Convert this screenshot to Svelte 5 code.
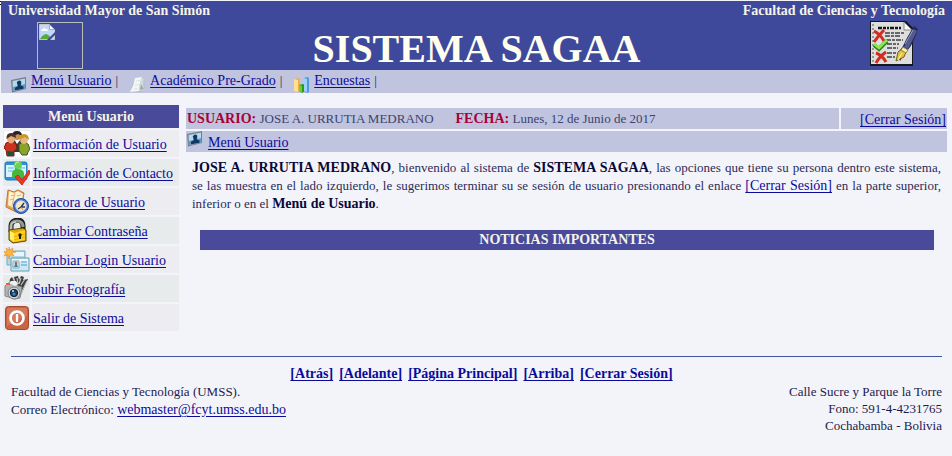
<script>
  const menu = [
    { icon: 'users', label: 'Información de Usuario' },
    { icon: 'contact', label: 'Información de Contacto' },
    { icon: 'log', label: 'Bitacora de Usuario' },
    { icon: 'lock', label: 'Cambiar Contraseña' },
    { icon: 'login', label: 'Cambiar Login Usuario' },
    { icon: 'camera', label: 'Subir Fotografía' },
    { icon: 'power', label: 'Salir de Sistema' }
  ];
  const sections = [
    { icon: 'person', label: 'Menú Usuario' },
    { icon: 'paper', label: 'Académico Pre-Grado' },
    { icon: 'chart', label: 'Encuestas' }
  ];
  const footerLinks = ['[Atrás]', '[Adelante]', '[Página Principal]', '[Arriba]', '[Cerrar Sesión]'];
</script>

{#snippet smallIcon(name)}
  <svg class="small-icon" viewBox="0 0 16 16" aria-hidden="true">
    {#if name === 'person'}
      <path d="M0 3 15 0V12L1 15.5Z" fill="#777e88" />
      <path d="M1.5 4 14 1.5V11.5L2 14Z" fill="#b4d8ec" />
      <path d="M2 10 14 7V11.5L2 14Z" fill="#639dc4" />
      <path d="M5.8 5.2Q8 2 10.2 4.5V7L9.6 8.2 12.5 9.6V11.8L4 13.2V10.7L6.8 9.2Z" fill="#113863" />
    {:else if name === 'paper'}
      <path d="M5 1 14 0 15 13 11 15 0 15Z" fill="#b3bec3" />
      <path d="M5 1 12 0Q9 7 9 14L0 15Q4 8 5 1Z" fill="#f2f6f5" />
      <path d="M12 0Q9 7 9 14L15 13Q12 8 14 2Z" fill="#d2dbdc" />
      <path d="m6 4 4-.5M5 8l4-.5M4 12l4-.5" stroke="#dbe5e3" fill="none" />
      <path d="m10 13 1-6 3 5Z" fill="#9faaad" />
    {:else}
      <path d="m0 2 4-1 2 1v12l-2 1-4-1Z" fill="#f4ae43" />
      <path d="m0 2 4 1v12l-4-1Z" fill="#ffdf94" />
      <path d="m5 8 4-1 2 1v6l-3 2-3-2Z" fill="#259f16" />
      <path d="m5 8 3 1v7l-3-2Z" fill="#6fd030" />
      <path d="m10 1 3-1 2 1v14l-2 1-3-2Z" fill="#5198dd" />
      <path d="m10 1 3 1v13l-3-1Z" fill="#9fd0f8" />
    {/if}
  </svg>
{/snippet}

{#snippet menuIcon(name)}
  <svg class="menu-icon" viewBox="0 0 26 26" aria-hidden="true">
    {#if name === 'users'}
      <rect width="26" height="26" fill="#fff" />
      <path d="m10 8 3 5 4-5 3 4-2 9H9Z" fill="#303e39" />
      <ellipse cx="13" cy="5" rx="3.7" ry="4" fill="#d18b59" />
      <path d="M8 5Q8 0 13 0t5 5l-4-2-4 2Z" fill="#252323" />
      <path d="M15 13Q19 10 24 13l2 5-2 3-1 3h-5l-3-4Z" fill="#8ba32a" stroke="#41521f" />
      <path d="M2 12q6-3 10 1l1 5-3 2v5H3l-1-6-2-2Z" fill="#cb3320" stroke="#771e14" />
      <path d="m3 20 7 1v4H4Z" fill="#1e5238" />
      <ellipse cx="7" cy="7.5" rx="4" ry="5" fill="#e7aa78" />
      <path d="M2.5 8Q2 2 7 2t5 5l-5-2-3 2Z" fill="#49312a" />
      <ellipse cx="20" cy="9" rx="3.8" ry="4" fill="#e4b87d" />
      <path d="M15.5 9Q15 3 20 3t5 6l-4-3-4 2Z" fill="#c49b22" />
    {:else if name === 'contact'}
      <rect x="1" y="2" width="22" height="18" rx="2" fill="#3093d1" stroke="#187bba" />
      <path d="M2 5h9v12H2ZM13 5h9v12h-9Z" fill="#d9f2ff" />
      <path d="M4 8h6M4 11h6M15 8h6" stroke="#65b7df" />
      <circle cx="14" cy="5" r="4" fill="#69d254" />
      <path d="M8 18v-5q1-4 6-4t6 4v5Z" fill="#46b93b" />
      <path d="M11 5q1-4 4-3" stroke="#c5f5a8" fill="none" />
      <path d="m11 17 3-2 4 5 7-10 1 3-8 12Z" fill="#e83b25" stroke="#d02b1c" />
    {:else if name === 'log'}
      <path d="m4 1 6 2 4-2 6 3-1 6 2 9-9 4-10-5Z" fill="#e8a34a" stroke="#b9783a" />
      <path d="m5 2 5 2 4-2 5 3-2 12-5 3-8-4Z" fill="#fff2ce" />
      <path d="m11 4-3 13M7 7l3-1m-4 5 3-1m4-3 4-1" stroke="#d6b184" fill="none" />
      <circle cx="17" cy="17" r="7.5" fill="#4776d1" stroke="#234b9f" />
      <circle cx="17" cy="17" r="5.2" fill="#fbe9b5" stroke="#bed5f4" />
      <path d="m20 14-3 4h4m-4 0-3 2" stroke="#283867" stroke-width="1.5" fill="none" />
      <path d="m17 18 2 3" stroke="#e2802c" />
    {:else if name === 'lock'}
      <path d="M7 14V8q0-5 6-6 6 0 6 6v4" fill="none" stroke="#1b1c1b" stroke-width="5" />
      <path d="M7 13V8q0-5 6-5 6 0 6 6" fill="none" stroke="#929990" stroke-width="3" />
      <path d="M7 13V8q0-4 5-4" fill="none" stroke="#e3e6de" />
      <path d="m5 12 14-2 3 2v11l-13 2-4-3Z" fill="#e2a50b" stroke="#5c4909" />
      <path d="m6 13 4 2v9l-4-3Z" fill="#fff264" />
      <path d="m10 15 11-3v10l-11 2Z" fill="#ffd118" />
      <path d="m10 19 11-3m-11 6 11-3" stroke="#e3aa10" />
      <circle cx="16" cy="17" r="1.7" fill="#211e16" />
      <path d="m15 17 2 0v4h-2Z" fill="#211e16" />
    {:else if name === 'login'}
      <path d="M3 4h18v14H3Z" fill="#b2d8e6" stroke="#76aabd" />
      <path d="M4 5h16v4H4Z" fill="#e8f6fb" />
      <path d="m5 0 1 3 3-2-1 3 4 1-4 1 2 3-4-1-1 4-1-4-4 1 2-3-3-1 4-1-1-3 3 2Z" fill="#ffb43a" stroke="#df8627" stroke-width=".5" />
      <path d="M7 11h18v13H7Z" fill="#cae9f4" stroke="#6d9fb1" />
      <path d="M8 12h16v4H8Z" fill="#eaf7fc" />
      <path d="M9 14h6v7H9Z" fill="#e7f6f7" stroke="#7badba" />
      <circle cx="12" cy="16" r="1.5" fill="#b76244" />
      <path d="m10 20 1-3h2l1 3Z" fill="#4a829b" />
      <path d="M17 15h6m-6 3h6" stroke="#79b5d1" stroke-width="1.5" />
    {:else if name === 'camera'}
      <path d="m6 3 2-2 3 5-1-5 4-1 1 4 2-4 3 1-1 3 5-1-8 18-12-6Z" fill="#3d3d3d" />
      <path d="m9 2 3 6m1-6 1 6m3-6-2 6m6-5-4 6m6-4-6 13" stroke="#c4c5c2" stroke-width="1.2" />
      <path d="m1 10 3-3h8l2 3 4 1-2 11-5 1-10-3Z" fill="#b1b4b5" stroke="#85888b" />
      <path d="m5 7 2-2h5l2 3-3 2Z" fill="#eff1f0" />
      <path d="M2 7h4v2H2Z" fill="#e7603a" />
      <circle cx="10" cy="17" r="6" fill="#d1d5d6" stroke="#808386" />
      <circle cx="10" cy="17" r="3.7" fill="#223d59" stroke="#0e202f" />
      <circle cx="10" cy="18" r="1.6" fill="#3a86c8" />
      <circle cx="9" cy="15" r="1" fill="#d3e7f4" />
    {:else}
      <rect x="1.5" y="1.5" width="23" height="23" rx="3" fill="#c86344" stroke="#a8492c" />
      <path d="M4 3h18q1 0 1 2v6Q14 14 3 21V5q0-2 1-2Z" fill="#d78768" opacity=".7" />
      <circle cx="13" cy="13" r="6.5" fill="none" stroke="#fff" stroke-width="2.7" />
      <path d="M13 9v8" stroke="#fff" stroke-width="2.3" />
    {/if}
  </svg>
{/snippet}

<div class="page">
  <header>
    <div class="institution">
      <span>Universidad Mayor de San Simón</span>
      <span>Facultad de Ciencias y Tecnología</span>
    </div>
    <div class="banner">
      <svg class="crest" viewBox="0 0 46 47" role="img" aria-label="Escudo">
        <rect x=".5" y=".5" width="45" height="46" fill="none" stroke="#bbbdb8" />
        <path d="M2.5 2.5h10l5 5v10h-15Z" fill="#c2d8f8" stroke="#c3c6cb" />
        <path d="M12.5 2.5v5h5Z" fill="#fff" stroke="#a9acb1" />
        <path d="M4 9q0-2 2-2 1-2 3 0 2 0 2 2Z" fill="#fff" />
        <path d="M3 17q2-4 6-5 4 1 5 5Z" fill="#55ad36" />
        <path d="m10 18 8-8v3l-5 5Z" fill="#3f499c" />
      </svg>
      <h1>SISTEMA SAGAA</h1>
      <svg class="form-icon" viewBox="0 0 48 46" role="img" aria-label="Formulario">
        <path d="M0 0h36l7 7v38H0Z" fill="#16171a" />
        <path d="M1 1h33l8 8v34H1Z" fill="#dedfdc" />
        <path d="M34 1v8h8Z" fill="#fafafa" stroke="#85878a" />
        <path d="M3 3v38" stroke="#555" stroke-dasharray="2 2" />
        <path d="M8 7h24" stroke="#17181a" stroke-width="2.5" stroke-dasharray="4 1 3 1 2 1" />
        <path d="M15 12h19M15 15h16M16 19h17M17 23h12M17 27h11M17 32h9M17 36h8" stroke="#404246" stroke-width="1.3" stroke-dasharray="5 1 3 1" />
        <path d="M4 10q6 3 10 10M14 9Q9 14 4 21M6 32q6 2 10 9M16 31q-6 4-10 11" fill="none" stroke="#d32a22" stroke-width="3" />
        <path d="m4 24 5 4 8-8" fill="none" stroke="#2c7c21" stroke-width="4" />
        <path d="m4 23 5 4 8-8" fill="none" stroke="#85ec42" stroke-width="2.5" />
        <path d="m28 32 5-7q4-9 11-20l4 3q-5 16-11 22l-7 10Z" fill="#242b57" />
        <path d="m34 26 9-18 4 2-9 18Z" fill="#535b8e" />
        <path d="m35 23 8-14" stroke="#9da3c6" />
        <path d="m26 40 2-9 4-3 4 3-2 5Z" fill="#e5c33e" stroke="#716326" />
        <path d="m28 39 4-7" stroke="#fff4a5" />
        <path d="m33 26 5 3-2 3-5-3Z" fill="#fff0a2" stroke="#8f8449" />
      </svg>
    </div>
  </header>

  <nav class="sections" aria-label="Secciones">
    {#each sections as section}
      <span class="section">{@render smallIcon(section.icon)}<a href="#inicio">{section.label}</a><span>|</span></span>
    {/each}
  </nav>

  <div class="columns">
    <nav class="side" aria-label="Menú de usuario">
      <h2>Menú Usuario</h2>
      <ul>
        {#each menu as item}
          <li>
            <span class="icon-cell">{@render menuIcon(item.icon)}</span>
            <a href="#opcion">{item.label}</a>
          </li>
        {/each}
      </ul>
    </nav>

    <main>
      <div class="session">
        <div class="who">
          <span><b>USUARIO:</b> JOSE A. URRUTIA MEDRANO</span>
          <span><b>FECHA:</b> Lunes, 12 de Junio de 2017</span>
        </div>
        <div class="logout"><a href="#salir">[Cerrar Sesión]</a></div>
      </div>
      <div class="trail">{@render smallIcon('person')}<a href="#inicio">Menú Usuario</a></div>
      <p>
        <b>JOSE A. URRUTIA MEDRANO</b>, bienvenido al sistema de <b>SISTEMA SAGAA</b>, las opciones que tiene su
        persona dentro este sistema, se&nbsp;las muestra en el lado izquierdo, le sugerimos terminar su se sesión de
        usuario presionando el enlace <a href="#salir">[Cerrar Sesión]</a> en la parte superior, inferior o en el
        <b>Menú de Usuario</b>.
      </p>
      <h2 class="news">NOTICIAS IMPORTANTES</h2>
    </main>
  </div>

  <footer>
    <nav class="footer-links" aria-label="Navegación">
      {#each footerLinks as label}
        <a href="#inicio">{label}</a>
      {/each}
    </nav>
    <div class="contact">
      <address>
        Facultad de Ciencias y Tecnología (UMSS).<br />
        Correo Electrónico: <a href="mailto:webmaster@fcyt.umss.edu.bo">webmaster@fcyt.umss.edu.bo</a>
      </address>
      <address>
        Calle Sucre y Parque la Torre<br />
        Fono: 591-4-4231765<br />
        Cochabamba - Bolivia
      </address>
    </div>
  </footer>
</div>

<style>
  :global(body) {
    margin: 0;
    background: #f3f4fa;
  }
  .page {
    padding: 1px 0 20px 1px;
    background: repeating-linear-gradient(#f3f4fa 0 1px, #111 1px 2px, #f3f4fa 2px 3px) 0 0 / 1px 7px no-repeat;
    font: 13px/18px "Liberation Serif", "Times New Roman", serif;
    color: #1c1a4c;
  }
  .page * {
    box-sizing: border-box;
  }
  a {
    color: #0b0b9b;
    font-size: 14px;
    text-underline-offset: 2px;
  }
  svg {
    display: block;
    flex: none;
  }
  h1,
  h2,
  p,
  ul {
    margin: 0;
    padding: 0;
  }
  header {
    background: #3f499c;
    color: #f5f4e8;
  }
  .institution {
    display: flex;
    justify-content: space-between;
    padding: 1px 7px;
    font-size: 14px;
    font-weight: bold;
  }
  .banner {
    display: flex;
    align-items: start;
    justify-content: space-between;
    padding: 0 34px 0 36px;
    height: 49px;
  }
  .crest {
    width: 46px;
    height: 47px;
    margin-top: 1px;
  }
  h1 {
    font-size: 40px;
    line-height: 55px;
    color: #fffff0;
  }
  .form-icon {
    width: 48px;
    height: 46px;
  }
  .sections {
    display: flex;
    gap: 12px;
    height: 23px;
    padding-left: 10px;
    background: #c0c4df;
    line-height: 22px;
  }
  .section {
    display: flex;
    gap: 4px;
  }
  .small-icon {
    width: 16px;
    height: 16px;
  }
  .section .small-icon {
    margin-top: 7px;
  }
  .columns {
    display: flex;
    align-items: start;
    gap: 7px;
    padding: 12px 5px 0 2px;
  }
  .side {
    flex: none;
    width: 176px;
  }
  h2 {
    background: #494a9a;
    color: #f5f4e8;
    font-size: 14px;
    text-align: center;
  }
  .side h2 {
    line-height: 23px;
  }
  ul {
    list-style: none;
  }
  li {
    display: grid;
    grid-template: 27px / 27px 1fr;
    gap: 2px;
    margin-top: 2px;
  }
  li > * {
    background: #ececf1;
  }
  li:nth-child(even) > * {
    background: #e7ebec;
  }
  li a {
    padding-left: 1px;
    line-height: 30px;
  }
  .icon-cell {
    padding: 1px 0 0 1px;
  }
  .menu-icon {
    width: 26px;
    height: 26px;
  }
  main {
    flex: 1;
    padding-top: 3px;
  }
  .session {
    display: grid;
    grid-template-columns: 1fr 106px;
    gap: 2px;
    margin-bottom: 2px;
    line-height: 21px;
    color: #3d426e;
  }
  .session > *,
  .trail {
    height: 21px;
    background: #c0c4df;
  }
  .who {
    display: flex;
    gap: 22px;
    padding-left: 1px;
  }
  .who b {
    color: #a80038;
    font-size: 14px;
  }
  .logout {
    padding-right: 1px;
    text-align: right;
    line-height: 23px;
  }
  .trail {
    display: flex;
    gap: 5px;
    padding-left: 1px;
    line-height: 23px;
  }
  p {
    margin: 7px 6px 17px;
    text-align: justify;
    color: #2c2a57;
  }
  p b {
    color: #0b0838;
    font-size: 14px;
  }
  .news {
    margin: 0 13px 0 14px;
    line-height: 20px;
  }
  footer {
    margin: 25px 10px 0;
    border-top: 1px solid #3f559c;
    padding-top: 8px;
  }
  .footer-links {
    display: flex;
    justify-content: center;
    gap: 6px;
    padding-left: 10px;
    font-weight: bold;
  }
  .contact {
    display: flex;
    justify-content: space-between;
  }
  address {
    font-style: normal;
  }
  address:last-child {
    text-align: right;
    line-height: 17px;
  }
</style>
